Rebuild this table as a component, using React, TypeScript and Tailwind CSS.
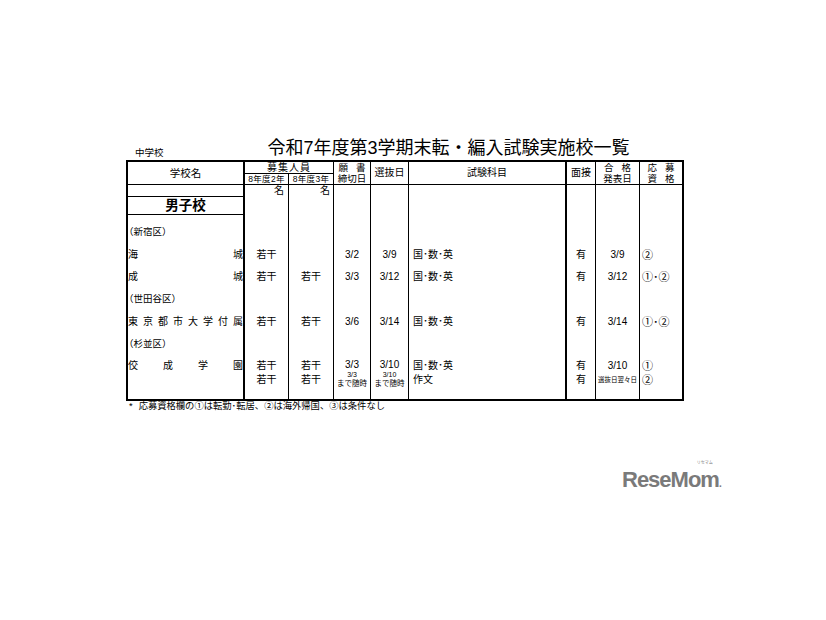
import React from "react";

// column template shared by header + body so the vertical rules line up
const G = "grid grid-cols-[117px_44px_45px_37px_38px_158px_29px_44px_42px]";

const colCls = [
  "border-r-2 border-black",
  "border-r border-black",
  "border-r border-black",
  "border-r border-black",
  "border-r border-black",
  "border-r-2 border-black",
  "border-r border-black",
  "border-r border-black",
  "",
];

const alignX = [
  "",
  "justify-center",
  "justify-center",
  "justify-center",
  "justify-center",
  "justify-start pl-[4px]",
  "justify-center",
  "justify-center",
  "justify-start pl-[2px]",
];

function Row({ h, align, cells, first = "" }: { h: string; align: string; cells: React.ReactNode[]; first?: string }) {
  return (
    <div className={`${G} ${h}`}>
      {cells.map((c, i) => (
        <div key={i} className={`flex ${align} ${colCls[i]} ${alignX[i]} ${i === 0 ? first : ""}`}>
          {c}
        </div>
      ))}
    </div>
  );
}

// school names are spread across the whole first column
function Spread({ text }: { text: string }) {
  return (
    <div className="flex w-full justify-between">
      {Array.from(text).map((ch, i) => (
        <span key={i}>{ch}</span>
      ))}
    </div>
  );
}

const Ward = ({ name }: { name: string }) => <span className="-ml-[4px] text-[9.5px]">{name}</span>;

function Stack({ lines }: { lines: React.ReactNode[] }) {
  return <div className="flex flex-col items-center leading-[14px]">{lines}</div>;
}

const Circ = ({ t }: { t: string }) => <span className="text-[11px] leading-[14px]">{t}</span>;

export default function App() {
  return (
    <div className="w-[826px] h-[620px] overflow-hidden bg-white text-black font-['Liberation_Sans','Noto_Sans_CJK_JP',sans-serif]">
      <div className="pl-[126px] pt-[133px]">
        <div className="flex h-[27px] w-[558px] items-end">
          <span className="mb-[1px] ml-[9px] text-[9.5px] leading-[12px]">中学校</span>
          <h1 className="ml-[104px] text-[18px] leading-[24px]">令和7年度第3学期末転・編入試験実施校一覧</h1>
        </div>

        <div className="w-[558px] border-2 border-black text-[10px] leading-[14px]">
          {/* header */}
          <div className={`${G} grid-rows-[12px_11px]`}>
            <div className="row-span-2 flex items-center justify-center border-r-2 border-b border-black text-[10.5px]">学校名</div>
            <div className="col-span-2 flex items-center justify-center border-r border-b border-black leading-[11px] tracking-[1px]">募集人員</div>
            <div className="row-span-2 flex flex-col items-center justify-center border-r border-b border-black text-[9.5px] leading-[11px]">
              <div className="flex w-[27px] justify-between"><span>願</span><span>書</span></div>
              <span>締切日</span>
            </div>
            <div className="row-span-2 flex items-center justify-center border-r border-b border-black">選抜日</div>
            <div className="row-span-2 flex items-center justify-center border-r-2 border-b border-black">試験科目</div>
            <div className="row-span-2 flex items-center justify-center border-r border-b border-black">面接</div>
            <div className="row-span-2 flex flex-col items-center justify-center border-r border-b border-black text-[9.5px] leading-[11px]">
              <div className="flex w-[27px] justify-between"><span>合</span><span>格</span></div>
              <span>発表日</span>
            </div>
            <div className="row-span-2 flex flex-col items-center justify-center border-b border-black text-[9.5px] leading-[11px]">
              <div className="flex w-[27px] justify-between"><span>応</span><span>募</span></div>
              <div className="flex w-[27px] justify-between"><span>資</span><span>格</span></div>
            </div>
            <div className="flex items-center justify-center border-r border-b border-black text-[8.5px] leading-[10px] tracking-[0.3px]">8年度2年</div>
            <div className="flex items-center justify-center border-r border-b border-black text-[8.5px] leading-[10px] tracking-[0.3px]">8年度3年</div>
          </div>

          {/* body */}
          <Row
            h="h-[12px]"
            align="items-start leading-[11px]"
            first="border-b border-black"
            cells={["", <span className="ml-auto mr-[4px]">名</span>, <span className="ml-auto mr-[3px]">名</span>, "", "", "", "", "", ""]}
          />
          <Row
            h="h-[18px]"
            align="items-center"
            first="justify-center border-b border-black"
            cells={[<span className="text-[13.5px] font-bold">男子校</span>, "", "", "", "", "", "", "", ""]}
          />
          <Row h="h-[28px]" align="items-end leading-[22px]" cells={[<Ward name="（新宿区）" />, "", "", "", "", "", "", "", ""]} />
          <Row
            h="h-[23px]"
            align="items-center"
            cells={[<Spread text="海城" />, "若干", "", "3/2", "3/9", "国･数･英", "有", "3/9", <Circ t="②" />]}
          />
          <Row
            h="h-[22px]"
            align="items-center"
            cells={[<Spread text="成城" />, "若干", "若干", "3/3", "3/12", "国･数･英", "有", "3/12", <Circ t="①･②" />]}
          />
          <Row h="h-[21px]" align="items-center" cells={[<Ward name="（世田谷区）" />, "", "", "", "", "", "", "", ""]} />
          <Row
            h="h-[25px]"
            align="items-center"
            cells={[<Spread text="東京都市大学付属" />, "若干", "若干", "3/6", "3/14", "国･数･英", "有", "3/14", <Circ t="①･②" />]}
          />
          <Row h="h-[20px]" align="items-center" cells={[<Ward name="（杉並区）" />, "", "", "", "", "", "", "", ""]} />
          <Row
            h="h-[45px]"
            align="items-start pt-[5px] leading-[14px]"
            cells={[
              <Spread text="佼成学園" />,
              <Stack lines={[<span key="a">若干</span>, <span key="b">若干</span>]} />,
              <Stack lines={[<span key="a">若干</span>, <span key="b">若干</span>]} />,
              <div className="flex flex-col items-center">
                <span className="leading-[12px]">3/3</span>
                <span className="text-[7px] leading-[8px]">3/3</span>
                <span className="text-[7.5px] leading-[9px]">まで随時</span>
              </div>,
              <div className="flex flex-col items-center">
                <span className="leading-[12px]">3/10</span>
                <span className="text-[7px] leading-[8px]">3/10</span>
                <span className="text-[7.5px] leading-[9px]">まで随時</span>
              </div>,
              <div className="flex flex-col">
                <span>国･数･英</span>
                <span>作文</span>
              </div>,
              <Stack lines={[<span key="a">有</span>, <span key="b">有</span>]} />,
              <div className="flex flex-col items-center">
                <span>3/10</span>
                <span className="text-[6.5px]">選抜日翌々日</span>
              </div>,
              <div className="flex flex-col">
                <Circ t="①" />
                <Circ t="②" />
              </div>,
            ]}
          />
        </div>

        <p className="ml-[3px] text-[9.3px] leading-[10px]">
          <span className="mr-[6px]">*</span>応募資格欄の①は転勤･転居、②は海外帰国、③は条件なし
        </p>

        {/* ReseMom mark */}
        <div className="relative ml-[496px] mt-[58px] w-fit text-[22px] font-bold leading-[22px] tracking-[-1px] text-[#7a7a7a]">
          ReseMom<span className="text-[10px]">.</span>
          <span className="absolute right-[8px] top-[-8px] text-[4px] font-normal leading-[4px] tracking-normal">リセマム</span>
        </div>
      </div>
    </div>
  );
}
